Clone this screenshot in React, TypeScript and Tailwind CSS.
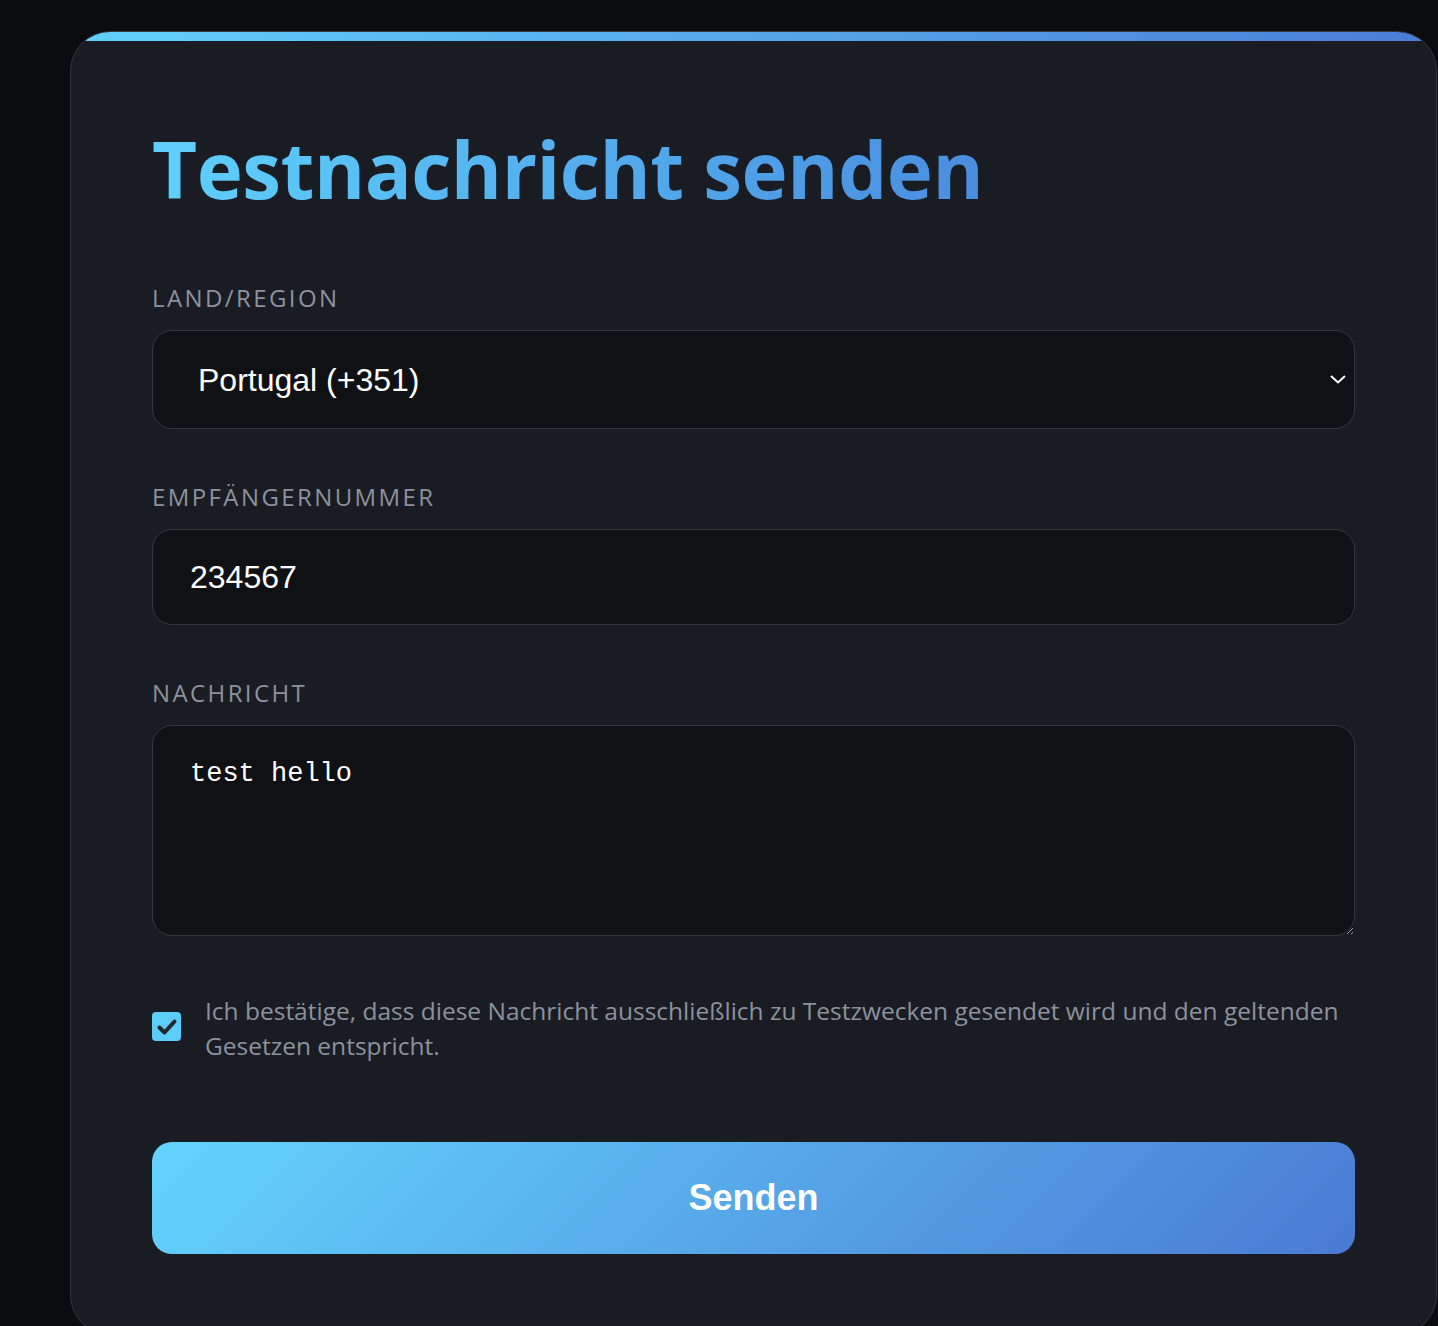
import { useState } from "react";

const App: React.FC = () => {
    const [country, setCountry] = useState('PT')
    const [phone, setPhone] = useState('234567')
    const [message, setMessage] = useState('test hello')
    const [agreed, setAgreed] = useState(true)

    return (
        <div className="min-h-screen bg-[#0b0c10] pl-[70px] pt-[31px] overflow-hidden">
            <div className="w-[1367px] rounded-[40px] border border-[#32353c] bg-[#1a1c23] overflow-hidden">
                <div className="h-[9px] bg-gradient-to-r from-[#62d0fb] to-[#4a7dd6]" />

                <div className="px-[81px] pt-[89px] pb-[80px]">
                    <h1 className="inline-block bg-gradient-to-r from-[#5fd0fb] to-[#4a8ddf] bg-clip-text text-transparent text-[78px] leading-[1] font-bold tracking-[-0.5px] font-['Open_Sans',sans-serif]">
                        Testnachricht senden
                    </h1>

                    <div className="mt-[76px]">
                        <label className="block text-[24px] leading-[28px] tracking-[0.1em] text-[#8b929c] font-['Open_Sans',sans-serif]">
                            LAND/REGION
                        </label>
                        <div className="relative mt-[18px]">
                            <select
                                value={country}
                                onChange={e => setCountry(e.target.value)}
                                className="w-full h-[99px] appearance-none rounded-[20px] border border-[#33373e] bg-[#0f1115] pl-[45px] text-[32px] text-white font-['Liberation_Sans',Arial,sans-serif] outline-none"
                            >
                                <option value="PT">Portugal (+351)</option>
                                <option value="DE">Deutschland (+49)</option>
                            </select>
                            <svg className="absolute right-[8px] top-[42px] pointer-events-none" width="18" height="14" viewBox="0 0 18 14" fill="none">
                                <path d="M2 4 L9 10.5 L16 4" stroke="#ffffff" strokeWidth="2" />
                            </svg>
                        </div>
                    </div>

                    <div className="mt-[54px]">
                        <label className="block text-[24px] leading-[28px] tracking-[0.1em] text-[#8b929c] font-['Open_Sans',sans-serif]">
                            EMPFÄNGERNUMMER
                        </label>
                        <input
                            value={phone}
                            onChange={e => setPhone(e.target.value)}
                            className="mt-[18px] block w-full h-[96px] rounded-[20px] border border-[#33373e] bg-[#0f1115] pl-[37px] text-[32px] text-white font-['Liberation_Sans',Arial,sans-serif] outline-none"
                        />
                    </div>

                    <div className="mt-[54px]">
                        <label className="block text-[24px] leading-[28px] tracking-[0.1em] text-[#8b929c] font-['Open_Sans',sans-serif]">
                            NACHRICHT
                        </label>
                        <textarea
                            value={message}
                            onChange={e => setMessage(e.target.value)}
                            className="mt-[18px] block w-full h-[211px] rounded-[20px] border border-[#33373e] bg-[#0f1115] px-[37px] pt-[28px] text-[27px] leading-[40px] text-white font-['Liberation_Mono',monospace] outline-none resize-y"
                        />
                    </div>

                    <div className="mt-[57px] flex items-start gap-[24px]">
                        <button
                            onClick={() => setAgreed(!agreed)}
                            className={"mt-[19px] shrink-0 w-[29px] h-[29px] rounded-[4px] flex items-center justify-center " + (agreed ? "bg-[#5ccdf8]" : "bg-[#0f1115] border border-[#33373e]")}
                        >
                            {agreed && (
                                <svg width="22" height="22" viewBox="0 0 22 22" fill="none">
                                    <path d="M3.5 11.5 L8.5 16.5 L18.5 5.5" stroke="#23272e" strokeWidth="4" strokeLinecap="round" strokeLinejoin="round" />
                                </svg>
                            )}
                        </button>
                        <p className="text-[24.5px] leading-[35px] text-[#8b929c] font-['Open_Sans',sans-serif]">
                            Ich bestätige, dass diese Nachricht ausschließlich zu Testzwecken gesendet wird und den geltenden Gesetzen entspricht.
                        </p>
                    </div>

                    <button className="mt-[79px] w-full h-[112px] rounded-[20px] bg-[linear-gradient(135deg,#63d4fd,#4a7ad3)] text-white text-[36px] font-bold font-['Liberation_Sans',Arial,sans-serif]">
                        Senden
                    </button>
                </div>
            </div>
        </div>
    );
}

export default App;
